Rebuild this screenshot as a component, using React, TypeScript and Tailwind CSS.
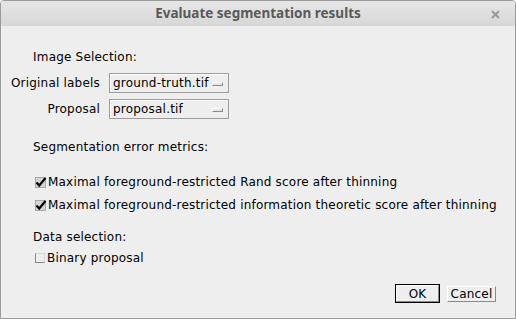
import React from "react";

const dlg = { fontFamily: '"DejaVu Sans", sans-serif' };

function Choice({ value }: { value: string }) {
  return (
    <div className="relative flex h-[20px] w-[120px] items-center border border-[#9c9c9c] bg-[#eeeeee] pl-[3px] shadow-[inset_1px_1px_0_#ffffff]">
      <span className="leading-none">{value}</span>
      <div className="absolute right-[5px] top-[8px] h-[4px] w-[11px] border border-t-white border-l-white border-r-[#8a8a8a] border-b-[#8a8a8a] bg-[#e6e6e6]" />
    </div>
  );
}

function Checked() {
  return (
    <svg width="12" height="12" viewBox="0 0 12 12" className="mr-[1px] shrink-0">
      <rect x="0.5" y="1.5" width="10" height="10" fill="#d4d4d4" stroke="#a8a8a8" />
      <path d="M1.5 6.5 L4.2 9.5 L10.5 2" fill="none" stroke="#000" strokeWidth="2.2" />
    </svg>
  );
}

function Unchecked() {
  return (
    <div className="mr-[2px] h-[10px] w-[10px] shrink-0 border border-l-[#8a8a8a] border-b-[#8a8a8a] border-t-[#d8d8d8] border-r-[#d8d8d8] bg-[#eeeeee]" />
  );
}

export default function App() {
  return (
    <div
      className="flex h-[319px] w-[516px] flex-col overflow-hidden rounded-t-[4px] border border-[#9a9a9a] bg-[#eeeeee] text-[12px] tracking-[0.2px] text-black"
      style={dlg}
    >
      <div className="relative flex h-[25px] shrink-0 items-center justify-center bg-gradient-to-b from-[#e6e6e6] to-[#d7d7d7]">
        <span
          className="text-[13.5px] font-bold tracking-normal text-[#5a5a5a]"
          style={{ fontFamily: '"Noto Sans", sans-serif' }}
        >
          Evaluate segmentation results
        </span>
        <svg
          width="9"
          height="9"
          viewBox="0 0 9 9"
          className="absolute right-[15px] top-[9px]"
        >
          <path d="M1 1 L8 8 M8 1 L1 8" stroke="#9a9a9a" strokeWidth="2" />
        </svg>
      </div>

      <div className="flex flex-1 flex-col">
        <div className="mt-[21px] flex h-[20px] items-center pl-[32px]">Image Selection:</div>

        <div className="mt-[6px] flex h-[20px] items-center">
          <div className="w-[99px] text-right">Original labels</div>
          <div className="ml-[9px]">
            <Choice value="ground-truth.tif" />
          </div>
        </div>
        <div className="mt-[6px] flex h-[20px] items-center">
          <div className="w-[99px] text-right">Proposal</div>
          <div className="ml-[9px]">
            <Choice value="proposal.tif" />
          </div>
        </div>

        <div className="mt-[18px] flex h-[20px] items-center pl-[32px]">Segmentation error metrics:</div>

        <div className="mt-[15px] flex h-[20px] items-center pl-[34px]">
          <Checked />
          <span>Maximal foreground-restricted Rand score after thinning</span>
        </div>
        <div className="mt-[3px] flex h-[20px] items-center pl-[34px]">
          <Checked />
          <span>Maximal foreground-restricted information theoretic score after thinning</span>
        </div>

        <div className="mt-[12px] flex h-[20px] items-center pl-[32px]">Data selection:</div>
        <div className="mt-[1px] flex h-[20px] items-center pl-[34px]">
          <Unchecked />
          <span>Binary proposal</span>
        </div>

        <div className="mt-[16px] flex items-start justify-end gap-[7px] pr-[19px]">
          <div className="border border-black">
            <div className="flex h-[17px] w-[43px] items-center justify-center border border-t-white border-l-white border-r-[#8a8a8a] border-b-[#8a8a8a] bg-[#eeeeee]">
              OK
            </div>
          </div>
          <div className="mt-[2px] flex h-[16px] w-[49px] items-center justify-center border border-t-white border-l-white border-r-[#8a8a8a] border-b-[#8a8a8a] bg-[#eeeeee]">
            Cancel
          </div>
        </div>
      </div>
    </div>
  );
}
